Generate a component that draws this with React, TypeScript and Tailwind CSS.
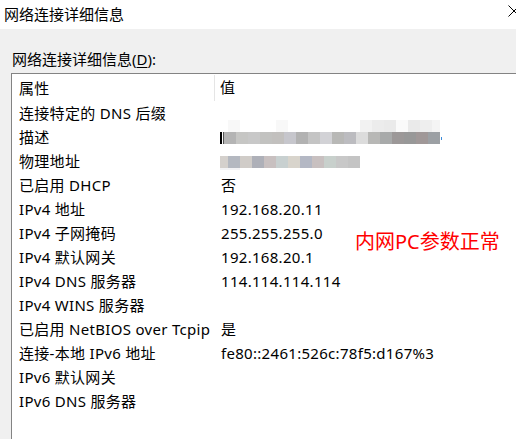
// 网络连接详细信息 对话框
const rows: [string, string][] = [
  ["连接特定的 DNS 后缀", ""],
  ["描述", "__desc"],
  ["物理地址", "__mac"],
  ["已启用 DHCP", "否"],
  ["IPv4 地址", "192.168.20.11"],
  ["IPv4 子网掩码", "255.255.255.0"],
  ["IPv4 默认网关", "192.168.20.1"],
  ["IPv4 DNS 服务器", "114.114.114.114"],
  ["IPv4 WINS 服务器", ""],
  ["已启用 NetBIOS over Tcpip", "是"],
  ["连接-本地 IPv6 地址", "fe80::2461:526c:78f5:d167%3"],
  ["IPv6 默认网关", ""],
  ["IPv6 DNS 服务器", ""],
];

// 打码的像素块 [宽, 颜色]
const descMain = [
  "#b4b4b4", "#c6c6c4", "#c8c8c8", "#c2c2c0", "#c2c0be", "#c6c6cc", "#b2b2b2", "#c4c4c4", "#d2d2d6",
  "#b8b8b6", "#bcbcc0", "#dcdcdc", "#b8b8b6", "#a8aaaa", "#9c9898", "#989898", "#a09898", "#9ca0a4",
];
const descTop: [number, string][] = [
  [8, "#ffffff"], [12, "#f8f8f8"], [36, "#ffffff"], [12, "#f8f8f8"], [72, "#ffffff"],
  [12, "#f2f2f2"], [12, "#ececec"], [12, "#eaeaea"], [12, "#fafafa"], [12, "#eaeaea"], [12, "#eeeeee"], [8, "#f4f4f4"],
];
const macBlocks: [number, string][] = [
  [8, "#d4d0cc"], [12, "#b4b8c0"], [12, "#d0ccc8"], [12, "#aeb0b8"], [12, "#c8c0c0"], [12, "#c8d0d0"],
  [12, "#d8d4cc"], [12, "#b4b8c4"], [12, "#c8c0c0"], [12, "#c8d0cc"], [12, "#c8c8c8"], [12, "#c4c4c4"],
];

function Value({ v }: { v: string }) {
  if (v === "__desc") {
    return (
      <div className="relative h-full">
        <div className="absolute left-[5px] top-[-5px] flex h-[12px]">
          {descTop.map(([w, c], i) => (
            <div key={i} className="h-full" style={{ width: w, background: c }} />
          ))}
        </div>
        <div className="flex items-center pl-[5px] pt-[7px]">
          {/* 被打码遮住的首字母，只露出一截 */}
          <div className="flex h-[12px] w-[4px] justify-between">
            <div className="w-[1.5px] bg-black" />
            <div className="w-[1px] bg-[#555]" />
          </div>
          {descMain.map((c, i) => (
            <div key={i} className="h-[12px] w-[12px]" style={{ background: c }} />
          ))}
          <div className="ml-[1px] h-[3px] w-[1px] bg-[#3a8ad8]" />
        </div>
      </div>
    );
  }
  if (v === "__mac") {
    return (
      <div className="pl-[5px] pt-[7px]">
        <div className="flex h-[12px]">
          {macBlocks.map(([w, c], i) => (
            <div key={i} className="h-full" style={{ width: w, background: c }} />
          ))}
        </div>
        <div className="h-[2px] w-[20px] bg-[#f2f2f4]" />
      </div>
    );
  }
  return <div className="flex h-full items-center pl-[6px]">{v}</div>;
}

export default function App() {
  return (
    <div
      className="relative flex h-[439px] w-[516px] flex-col overflow-hidden bg-[#f0f0f0] text-[15px] text-black"
      style={{ fontFamily: '"Noto Sans", "Noto Sans CJK SC", sans-serif' }}
    >
      <div className="relative flex h-[29px] shrink-0 items-center bg-white pl-[4px]">
        网络连接详细信息
        <svg className="absolute left-[508px] top-[5px]" width="12" height="12" viewBox="0 0 12 12">
          <path d="M0.5 0.5L11.5 11.5M11.5 0.5L0.5 11.5" stroke="#000" strokeWidth="1" fill="none" />
        </svg>
      </div>

      <div className="h-[20px] shrink-0 pl-[12px] leading-[20px] mt-[20px] mb-[4px]">
        网络连接详细信息(<span className="underline underline-offset-2">D</span>):
      </div>

      <div className="ml-[11px] w-[530px] flex-1 border-l border-t border-[#838383] bg-white tracking-[0.3px]">
        <div className="grid h-[27px] grid-cols-[203px_1fr]">
          <div className="flex items-center border-r border-[#e5e5e5] pl-[7px] mt-[1px]">属性</div>
          <div className="flex items-center pl-[5px]">值</div>
        </div>
        {rows.map(([k, v]) => (
          <div key={k} className="grid h-[24px] grid-cols-[203px_1fr]">
            <div className="flex items-center whitespace-nowrap pl-[7px]">{k}</div>
            <Value v={v} />
          </div>
        ))}
      </div>

      <div className="absolute left-[355px] top-[228px] text-[20px] leading-[28px] text-[#ff0000]">
        内网PC参数正常
      </div>
    </div>
  );
}
